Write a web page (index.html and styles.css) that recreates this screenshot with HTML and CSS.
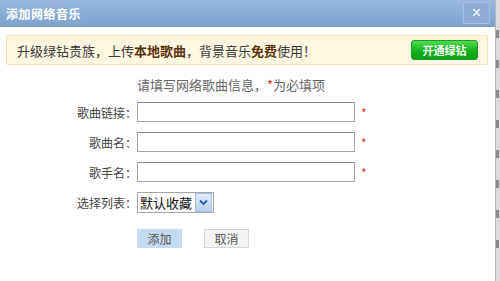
FILE: index.html
```html
<!DOCTYPE html>
<html>
<head>
	<title>添加网络音乐</title>
	<meta charset="utf-8">
	<link rel="stylesheet" href="styles.css">
</head>
<body>
	<div class="page">
		<div class="dialog">
			<div class="titleBar">
				<span class="title">添加网络音乐</span>
				<button class="close">×</button>
			</div>
			<div class="notice">
				<span class="noticeText">升级绿钻贵族，上传<b>本地歌曲</b>，背景音乐<b>免费</b>使用！</span>
				<button class="greenBtn">开通绿钻</button>
			</div>
			<p class="tip">请填写网络歌曲信息，<span class="star">*</span>为必填项</p>
			<div class="form">
				<div class="row">
					<label class="label">歌曲链接：</label>
					<input class="text" type="text">
					<span class="star">*</span>
				</div>
				<div class="row">
					<label class="label">歌曲名：</label>
					<input class="text" type="text">
					<span class="star">*</span>
				</div>
				<div class="row">
					<label class="label">歌手名：</label>
					<input class="text" type="text">
					<span class="star">*</span>
				</div>
				<div class="row">
					<label class="label">选择列表：</label>
					<div class="select">
						<span class="selectText">默认收藏</span>
						<span class="arrow">
							<svg width="9" height="7" viewBox="0 0 9 7"><path d="M1 1.5 L4.5 5 L8 1.5" fill="none" stroke="#2a5fb0" stroke-width="1.8"/></svg>
						</span>
					</div>
				</div>
				<div class="btnRow">
					<button class="btn add">添加</button>
					<button class="btn cancel">取消</button>
				</div>
			</div>
		</div>
		<div class="side">
			<i></i><i></i><i></i><i></i><i></i><i></i><i></i><i></i>
		</div>
	</div>
</body>
</html>
```

FILE: styles.css
```css
body {
	margin: 0;
	background: #fff;
	font-family: "Noto Sans CJK SC", "Liberation Sans", sans-serif;
	font-size: 12px;
	color: #333;
}
.page {
	display: flex;
	width: 500px;
	height: 281px;
	overflow: hidden;
}
.dialog {
	width: 495px;
	background: #fff;
	border-right: 1px solid #b8b8b8;
}
.titleBar {
	height: 26px;
	display: flex;
	align-items: center;
	justify-content: space-between;
	padding: 0 5px 0 6px;
	background: linear-gradient(#9ab8dd, #7fa3cf);
	border-bottom: 1px solid #7698c4;
}
.title {
	color: #fff;
	font-weight: bold;
	font-size: 12px;
	letter-spacing: 0.5px;
}
.close {
	width: 27px;
	height: 22px;
	margin-top: 0;
	border: 1px solid #a8c2e2;
	border-radius: 2px;
	background: #8eaed8;
	color: #fff;
	font-size: 16px;
	line-height: 18px;
	padding: 0;
}
.notice {
	margin: 8px 7px 0 6px;
	height: 28px;
	display: flex;
	align-items: center;
	justify-content: space-between;
	padding: 0 9px 0 10px;
	background: #fdf6e1;
	border: 1px solid #efe1b8;
	border-radius: 2px;
}
.noticeText {
	font-size: 13px;
	color: #3a3a3a;
}
.noticeText b {
	color: #5a3206;
}
.greenBtn {
	width: 67px;
	height: 20px;
	border: 1px solid #1d9a24;
	border-radius: 3px;
	background: linear-gradient(#4fdc50, #15b21c 55%, #0e9f16);
	color: #fff;
	font-weight: bold;
	font-size: 11px;
	padding: 0;
	font-family: inherit;
}
.tip {
	margin: 10px 0 0 0;
	padding-left: 137px;
	font-size: 13px;
	color: #666;
	line-height: 20px;
}
.star {
	color: #d43030;
}
.form {
	margin-top: 2px;
}
.row {
	display: flex;
	align-items: center;
	height: 30px;
}
.label {
	width: 137px;
	text-align: right;
	font-size: 12px;
	color: #444;
}
.text {
	width: 216px;
	height: 18px;
	margin: 0;
	padding: 0;
	border: 1px solid #a5a5a5;
	border-top-color: #8a8a8a;
}
.row .star {
	margin-left: 6px;
	font-size: 12px;
}
.select {
	display: flex;
	align-items: center;
	height: 19px;
	border: 1px solid #a5a5a5;
	background: #fff;
}
.selectText {
	font-size: 13px;
	color: #111;
	padding: 0 3px 0 2px;
}
.arrow {
	width: 15px;
	height: 17px;
	display: flex;
	align-items: center;
	justify-content: center;
	background: linear-gradient(#e2ecf9, #b9cfee);
	border: 1px solid #a3bde3;
	margin-right: 1px;
}
.btnRow {
	display: flex;
	gap: 22px;
	padding-left: 137px;
	margin-top: 12px;
}
.btn {
	width: 45px;
	height: 19px;
	font-size: 12px;
	padding: 0;
	font-family: inherit;
	color: #555;
}
.add {
	background: #c7dbf0;
	border: 1px solid #c7dbf0;
}
.cancel {
	background: #f4f4f4;
	border: 1px solid #d6d6d6;
}
.side {
	flex: 1;
	background: #dcdcdc;
	display: flex;
	flex-direction: column;
	gap: 22px;
	padding-top: 30px;
}
.side i {
	display: block;
	width: 3px;
	height: 8px;
	background: #8a8a8a;
}
```
